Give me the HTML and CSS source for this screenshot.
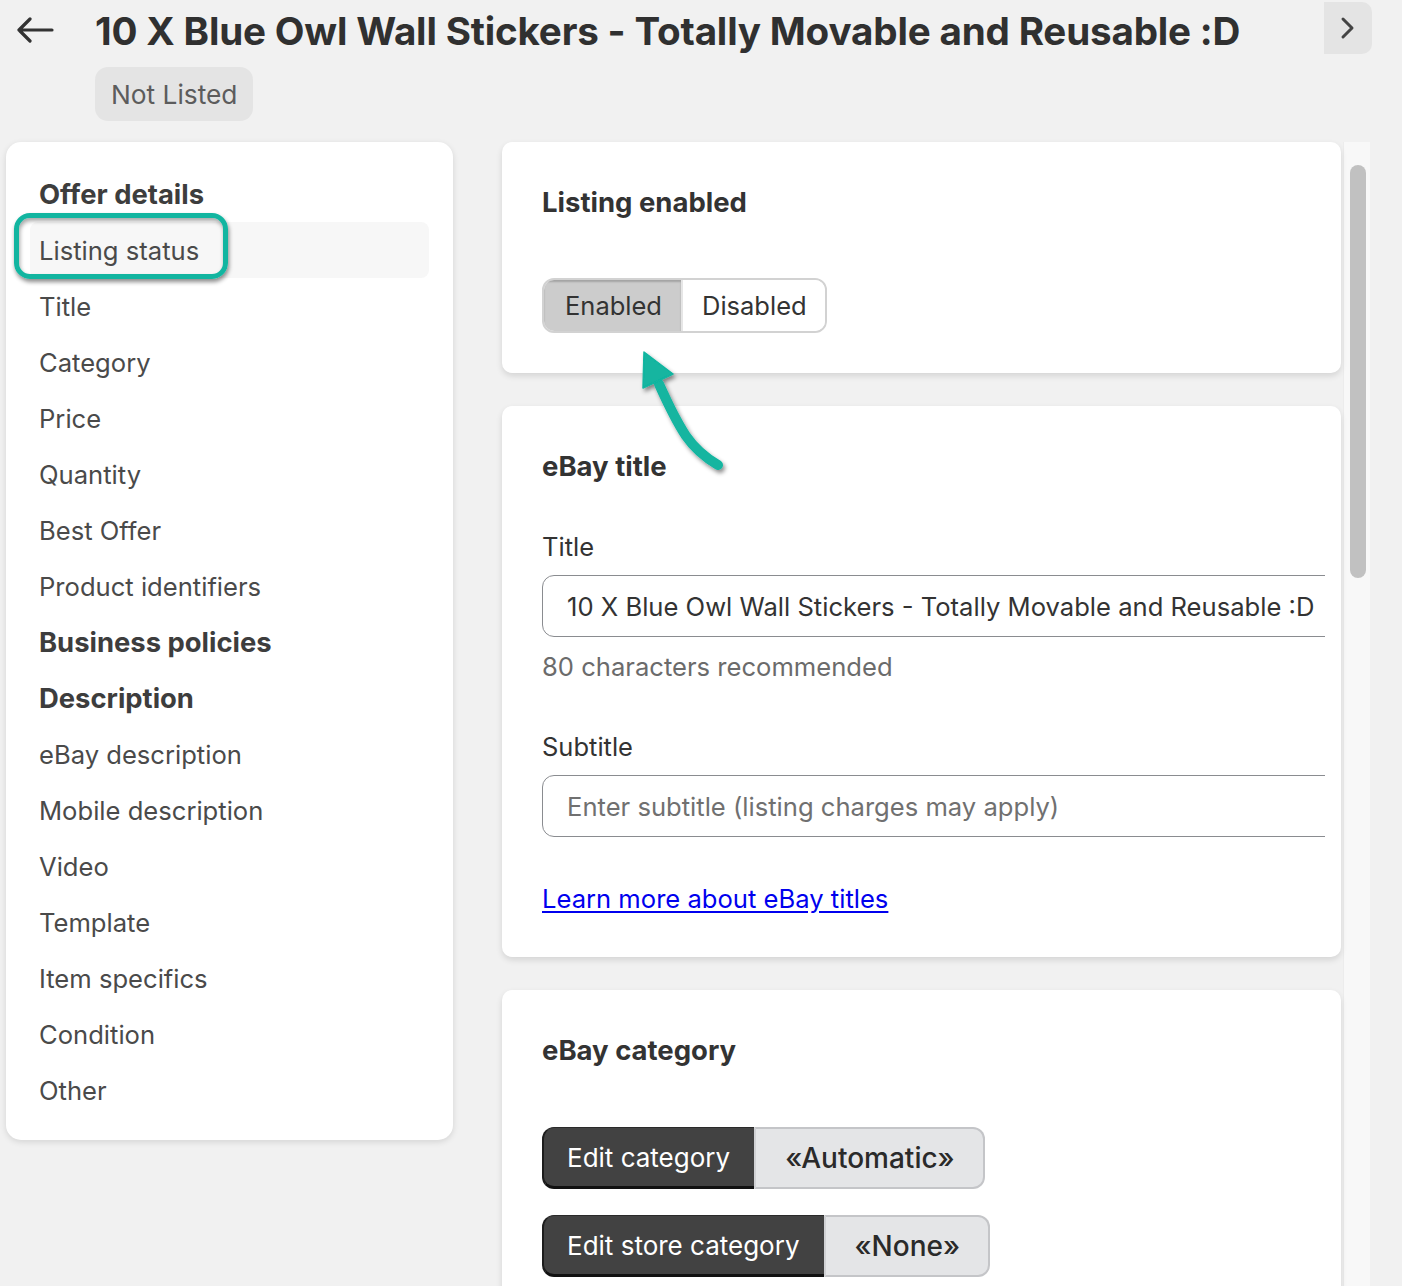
FILE: index.html
```html
<!DOCTYPE html>
<html lang="en">
<head>
<meta charset="utf-8">
<title>Listing</title>
<link rel="stylesheet" href="styles.css">
</head>
<body>
<header class="header">
  <div class="back">
    <svg width="38" height="26" viewBox="0 0 38 26"><path d="M36 13H3M14 2L3 13l11 11" fill="none" stroke="#333" stroke-width="3.2" stroke-linecap="round" stroke-linejoin="round"/></svg>
  </div>
  <div class="head-main">
    <h1 class="title">10 X Blue Owl Wall Stickers - Totally Movable and Reusable :D</h1>
    <span class="badge">Not Listed</span>
  </div>
  <div class="next">
    <svg width="20" height="26" viewBox="0 0 20 26"><path d="M5 4l9 9-9 9" fill="none" stroke="#444" stroke-width="3" stroke-linecap="round" stroke-linejoin="round"/></svg>
  </div>
</header>

<div class="content">
  <nav class="sidebar">
    <div class="row head">Offer details</div>
    <div class="row active">Listing status</div>
    <div class="row">Title</div>
    <div class="row">Category</div>
    <div class="row">Price</div>
    <div class="row">Quantity</div>
    <div class="row">Best Offer</div>
    <div class="row">Product identifiers</div>
    <div class="row head">Business policies</div>
    <div class="row head">Description</div>
    <div class="row">eBay description</div>
    <div class="row">Mobile description</div>
    <div class="row">Video</div>
    <div class="row">Template</div>
    <div class="row">Item specifics</div>
    <div class="row">Condition</div>
    <div class="row">Other</div>
    <div class="callout"></div>
  </nav>

  <main class="main">
    <section class="card card-status">
      <h2 class="card-title">Listing enabled</h2>
      <div class="segmented">
        <span class="seg seg-on">Enabled</span>
        <span class="seg">Disabled</span>
      </div>
    </section>

    <section class="card card-title-sec">
      <h2 class="card-title">eBay title</h2>
      <label class="label">Title</label>
      <div class="clip">
        <div class="input">10 X Blue Owl Wall Stickers - Totally Movable and Reusable :D</div>
      </div>
      <div class="help">80 characters recommended</div>
      <label class="label label-sub">Subtitle</label>
      <div class="clip">
        <div class="input placeholder">Enter subtitle (listing charges may apply)</div>
      </div>
      <a class="link" href="#">Learn more about eBay titles</a>
    </section>

    <section class="card card-cat">
      <h2 class="card-title">eBay category</h2>
      <div class="btn-group first">
        <span class="btn-dark">Edit category</span>
        <span class="btn-light">«Automatic»</span>
      </div>
      <div class="btn-group">
        <span class="btn-dark">Edit store category</span>
        <span class="btn-light btn-none">«None»</span>
      </div>
    </section>

    <svg class="arrow" width="120" height="150" viewBox="0 0 120 150">
      <defs>
        <filter id="sh" x="-30%" y="-30%" width="160%" height="160%">
          <feDropShadow dx="2" dy="3" stdDeviation="2" flood-color="#000" flood-opacity="0.45"/>
        </filter>
      </defs>
      <g filter="url(#sh)" fill="#12b5a0" stroke="#12b5a0">
        <path d="M88 125C76 118 65 109 56 96C46 81 38 64 29 44" fill="none" stroke-width="10" stroke-linecap="round"/>
        <path d="M14 12L13 48L43 34Z" stroke-width="1.5" stroke-linejoin="round"/>
      </g>
    </svg>
  </main>

  <div class="scrolltrack"><div class="thumb"></div></div>
</div>
</body>
</html>
```

FILE: styles.css
```css
* { box-sizing: border-box; }
html, body { margin: 0; padding: 0; }
body {
  background: #f1f1f1;
  font-family: Inter, "Noto Sans", "Liberation Sans", sans-serif;
  color: #333;
  width: 1402px;
  height: 1286px;
  overflow: hidden;
}

.header {
  display: flex;
  align-items: flex-start;
  height: 142px;
}
.back {
  width: 95px;
  padding: 17px 0 0 16px;
}
.head-main {
  flex: 1;
  display: flex;
  flex-direction: column;
  align-items: flex-start;
}
.title {
  margin: 7px 0 0;
  font-size: 38.6px;
  line-height: 48px;
  font-weight: 700;
  color: #303030;
  letter-spacing: -0.17px;
  white-space: nowrap;
}
.badge {
  margin-top: 12px;
  height: 54px;
  padding: 0 16px;
  display: inline-flex;
  align-items: center;
  background: #e4e4e4;
  border-radius: 13px;
  font-size: 26.3px;
  color: #5c5c5c;
}
.next {
  margin: 2px 30px 0 0;
  width: 48px;
  height: 52px;
  background: #e4e4e4;
  border-radius: 0 10px 10px 0;
  display: flex;
  align-items: center;
  justify-content: center;
}

.content {
  display: flex;
  align-items: flex-start;
}
.sidebar {
  position: relative;
  margin-left: 6px;
  width: 447px;
  background: #fff;
  border-radius: 15px;
  box-shadow: 0 2px 6px rgba(0,0,0,0.12);
  padding: 24px 24px 22px;
}
.row {
  height: 56px;
  display: flex;
  align-items: center;
  padding-left: 9px;
  font-size: 25.6px;
  color: #4a4a4a;
  border-radius: 8px;
}
.row.head {
  font-weight: 700;
  font-size: 27.4px;
  color: #3d3d3d;
}
.row.active { background: #f7f7f7; }

.callout {
  position: absolute;
  left: 8px;
  top: 71px;
  width: 214px;
  height: 66px;
  border: 5px solid #12b5a0;
  border-radius: 16px;
  box-shadow: 1px 3px 4px rgba(0,0,0,0.45), inset 1px 3px 4px rgba(0,0,0,0.35);
}

.main {
  position: relative;
  margin-left: 49px;
  width: 839px;
  display: flex;
  flex-direction: column;
  gap: 33px;
}
.card {
  background: #fff;
  border-radius: 10px;
  box-shadow: 0 3px 6px rgba(0,0,0,0.12);
  padding: 44px 0 40px 40px;
  display: flex;
  flex-direction: column;
  align-items: flex-start;
}
.card-title {
  margin: 0;
  font-size: 27.5px;
  line-height: 32px;
  font-weight: 700;
  color: #333;
}

.segmented {
  margin-top: 60px;
  display: flex;
  height: 55px;
  border: 2px solid #d2d2d2;
  border-radius: 12px;
  overflow: hidden;
}
.seg {
  display: flex;
  align-items: center;
  padding: 0 18px 0 19px;
  font-size: 25.5px;
  color: #333;
  background: #fff;
}
.seg-on {
  padding: 0 19px 0 21px;
  background: #cccccc;
  box-shadow: inset 0 2px 2px rgba(0,0,0,0.2);
  border-right: 2px solid #e6e6e6;
}

.card-title-sec { padding-bottom: 43px; }
.label {
  margin-top: 50px;
  font-size: 25.5px;
  line-height: 30px;
  color: #333;
}
.label-sub { margin-top: 50px; }
.clip {
  margin-top: 13px;
  width: 783px;
  overflow: hidden;
}
.input {
  width: 900px;
  height: 62px;
  border: 1.5px solid #8a8c90;
  border-radius: 12px;
  padding: 0 24px;
  display: flex;
  align-items: center;
  font-size: 25.6px;
  color: #333;
  white-space: nowrap;
}
.placeholder { color: #707070; }
.help {
  margin-top: 15px;
  font-size: 25.6px;
  line-height: 30px;
  color: #6b6b6b;
}
.link {
  margin-top: 47px;
  font-size: 25.6px;
  line-height: 30px;
  color: #0000ee;
  text-decoration: underline;
  text-underline-offset: 3px;
}

.btn-group {
  display: flex;
  height: 62px;
  margin-top: 26px;
}
.btn-group.first { margin-top: 61px; }
.btn-dark {
  display: flex;
  align-items: center;
  padding: 0 24px 0 23px;
  background: #424242;
  color: #fff;
  font-size: 26px;
  border-radius: 12px 0 0 12px;
  border-left: 2px solid #1c1c1c;
  border-bottom: 3px solid #111;
  border-top: 1px solid #2a2a2a;
  white-space: nowrap;
}
.btn-light {
  display: flex;
  align-items: center;
  padding: 0 28px 0 29px;
  background: #e4e5e7;
  border: 2px solid #c4c5c8;
  border-left: 2px solid #d0d1d4;
  border-radius: 0 12px 12px 0;
  font-size: 28px;
  font-weight: 500;
  color: #2a2a2a;
  white-space: nowrap;
}

.arrow {
  position: absolute;
  left: 128px;
  top: 198px;
}

.scrolltrack {
  margin-left: 2px;
  width: 27px;
  height: 1144px;
  background: #f8f8f8;
  border-left: 1px solid #ececec;
  padding: 23px 0 0 6px;
}
.thumb {
  width: 16px;
  height: 413px;
  background: #c1c1c1;
  border-radius: 8px;
}
```
